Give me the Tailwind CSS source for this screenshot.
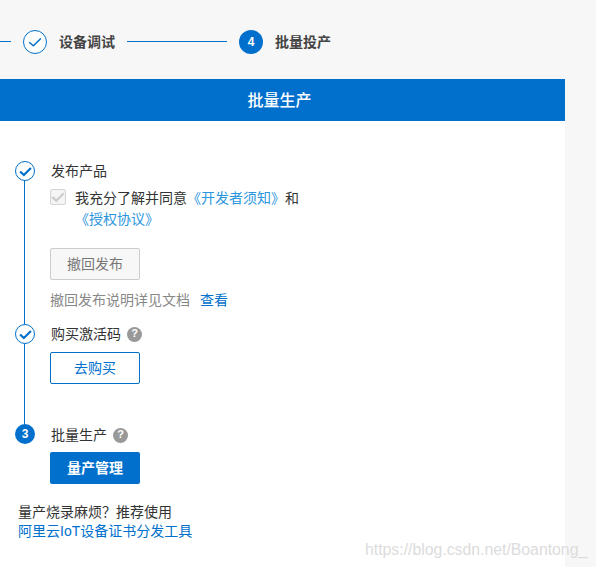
<!DOCTYPE html>
<html lang="zh-CN">
<head>
    <meta charset="UTF-8">
    <title>批量生产</title>
    <script src="https://cdn.jsdelivr.net/npm/@tailwindcss/browser@4"></script>
</head>
<body class="relative h-[567px] w-[596px] overflow-hidden bg-[#f7f7f7] font-['Liberation_Sans','Noto_Sans_CJK_SC',sans-serif] text-sm text-[#333]">
    <!-- Top steps -->
    <div class="flex h-[79px] w-[565px] items-center pt-[5px]">
        <div class="mb-px h-px w-[11px] bg-[#0070cc]"></div>
        <div class="ml-[12px] flex h-6 w-6 items-center justify-center rounded-full border border-[#0070cc] bg-white">
            <svg class="h-[14px] w-[14px]" viewBox="0 0 12 12" fill="none" stroke="#0070cc" stroke-width="1.3"><path d="M1 6.2 4.6 9.2 11 3"/></svg>
        </div>
        <span class="ml-3 font-bold text-[#444]">设备调试</span>
        <div class="mb-px ml-3 h-px w-[100px] bg-[#0070cc]"></div>
        <div class="ml-3 flex h-6 w-6 items-center justify-center rounded-full bg-[#0070cc] text-xs font-bold text-white">4</div>
        <span class="ml-3 font-bold text-[#444]">批量投产</span>
    </div>

    <!-- Panel -->
    <div class="h-[488px] w-[565px] bg-white">
        <div class="flex h-[42px] items-center justify-center bg-[#0070cc] pr-[6px] pt-[2px] text-base font-medium text-white">批量生产</div>

        <div class="pl-[15px] pt-[40px]">
            <!-- Step 1 -->
            <div class="flex h-[163px]">
                <div class="flex w-5 flex-col">
                    <div class="flex h-5 w-5 shrink-0 items-center justify-center rounded-full border border-[#0070cc] bg-white">
                        <svg class="h-[13px] w-[13px]" viewBox="0 0 12 12" fill="none" stroke="#0070cc" stroke-width="2"><path d="M1 6 4.5 9.2 11 2.8"/></svg>
                    </div>
                    <div class="ml-[9px] w-px grow bg-[#0070cc]"></div>
                </div>
                <div class="ml-[15px]">
                    <div class="h-5 pl-px leading-5">发布产品</div>
                    <div class="mt-[7px] flex w-[260px]">
                        <div class="mt-[1px] flex h-4 w-4 shrink-0 items-center justify-center rounded-[2px] border border-[#d5d5d5] bg-[#f5f5f5]">
                            <svg class="h-[14px] w-[14px] shrink-0" viewBox="0 0 12 12" fill="none" stroke="#ccc" stroke-width="2"><path d="M1 6 4.5 9.2 11 2.8"/></svg>
                        </div>
                        <p class="ml-[9px] w-[235px] leading-[21px]">我充分了解并同意<span class="text-[#2b95dd]">《开发者须知》</span>和<br><span class="text-[#2b95dd]">《授权协议》</span></p>
                    </div>
                    <button class="mt-[18px] block h-8 w-[90px] rounded-[2px] border border-[#ccc] bg-[#f7f7f7] text-[#777]">撤回发布</button>
                    <p class="mt-[10px] leading-5 text-[#888]">撤回发布说明详见文档<a class="ml-[10px] text-[#0070cc]">查看</a></p>
                </div>
            </div>

            <!-- Step 2 -->
            <div class="flex h-[100px]">
                <div class="flex w-5 flex-col">
                    <div class="flex h-5 w-5 shrink-0 items-center justify-center rounded-full border border-[#0070cc] bg-white">
                        <svg class="h-[13px] w-[13px]" viewBox="0 0 12 12" fill="none" stroke="#0070cc" stroke-width="2"><path d="M1 6 4.5 9.2 11 2.8"/></svg>
                    </div>
                    <div class="ml-[9px] w-px grow bg-[#0070cc]"></div>
                </div>
                <div class="ml-[15px]">
                    <div class="flex h-5 items-center pl-px">购买激活码<span class="ml-[6px] flex h-[15px] w-[15px] items-center justify-center rounded-full bg-[#999] text-[11px] font-bold text-white">?</span></div>
                    <button class="mt-2 block h-8 w-[90px] rounded-[2px] border border-[#0070cc] bg-white text-[#0070cc]">去购买</button>
                </div>
            </div>

            <!-- Step 3 -->
            <div class="flex">
                <div class="flex h-5 w-5 shrink-0 items-center justify-center rounded-full bg-[#0070cc] text-xs font-bold text-white">3</div>
                <div class="ml-[15px]">
                    <div class="flex h-5 items-center pl-px pt-[2px]">批量生产<span class="ml-[6px] flex h-[15px] w-[15px] items-center justify-center rounded-full bg-[#999] text-[11px] font-bold text-white">?</span></div>
                    <button class="mt-2 block h-8 w-[90px] rounded-[2px] bg-[#0070cc] font-bold text-white">量产管理</button>
                </div>
            </div>
        </div>

        <div class="pl-[18px] pt-[18px] leading-[20px]">
            <p>量产烧录麻烦？推荐使用</p>
            <a class="-mt-[1px] block text-[#0070cc]">阿里云IoT设备证书分发工具</a>
        </div>
    </div>

    <!-- Watermark -->
    <div class="absolute left-[365px] top-[541px] text-[15.8px] leading-[18px] text-[#dcdcdc]">https://blog.csdn.net/Boantong_</div>
</body>
</html>
